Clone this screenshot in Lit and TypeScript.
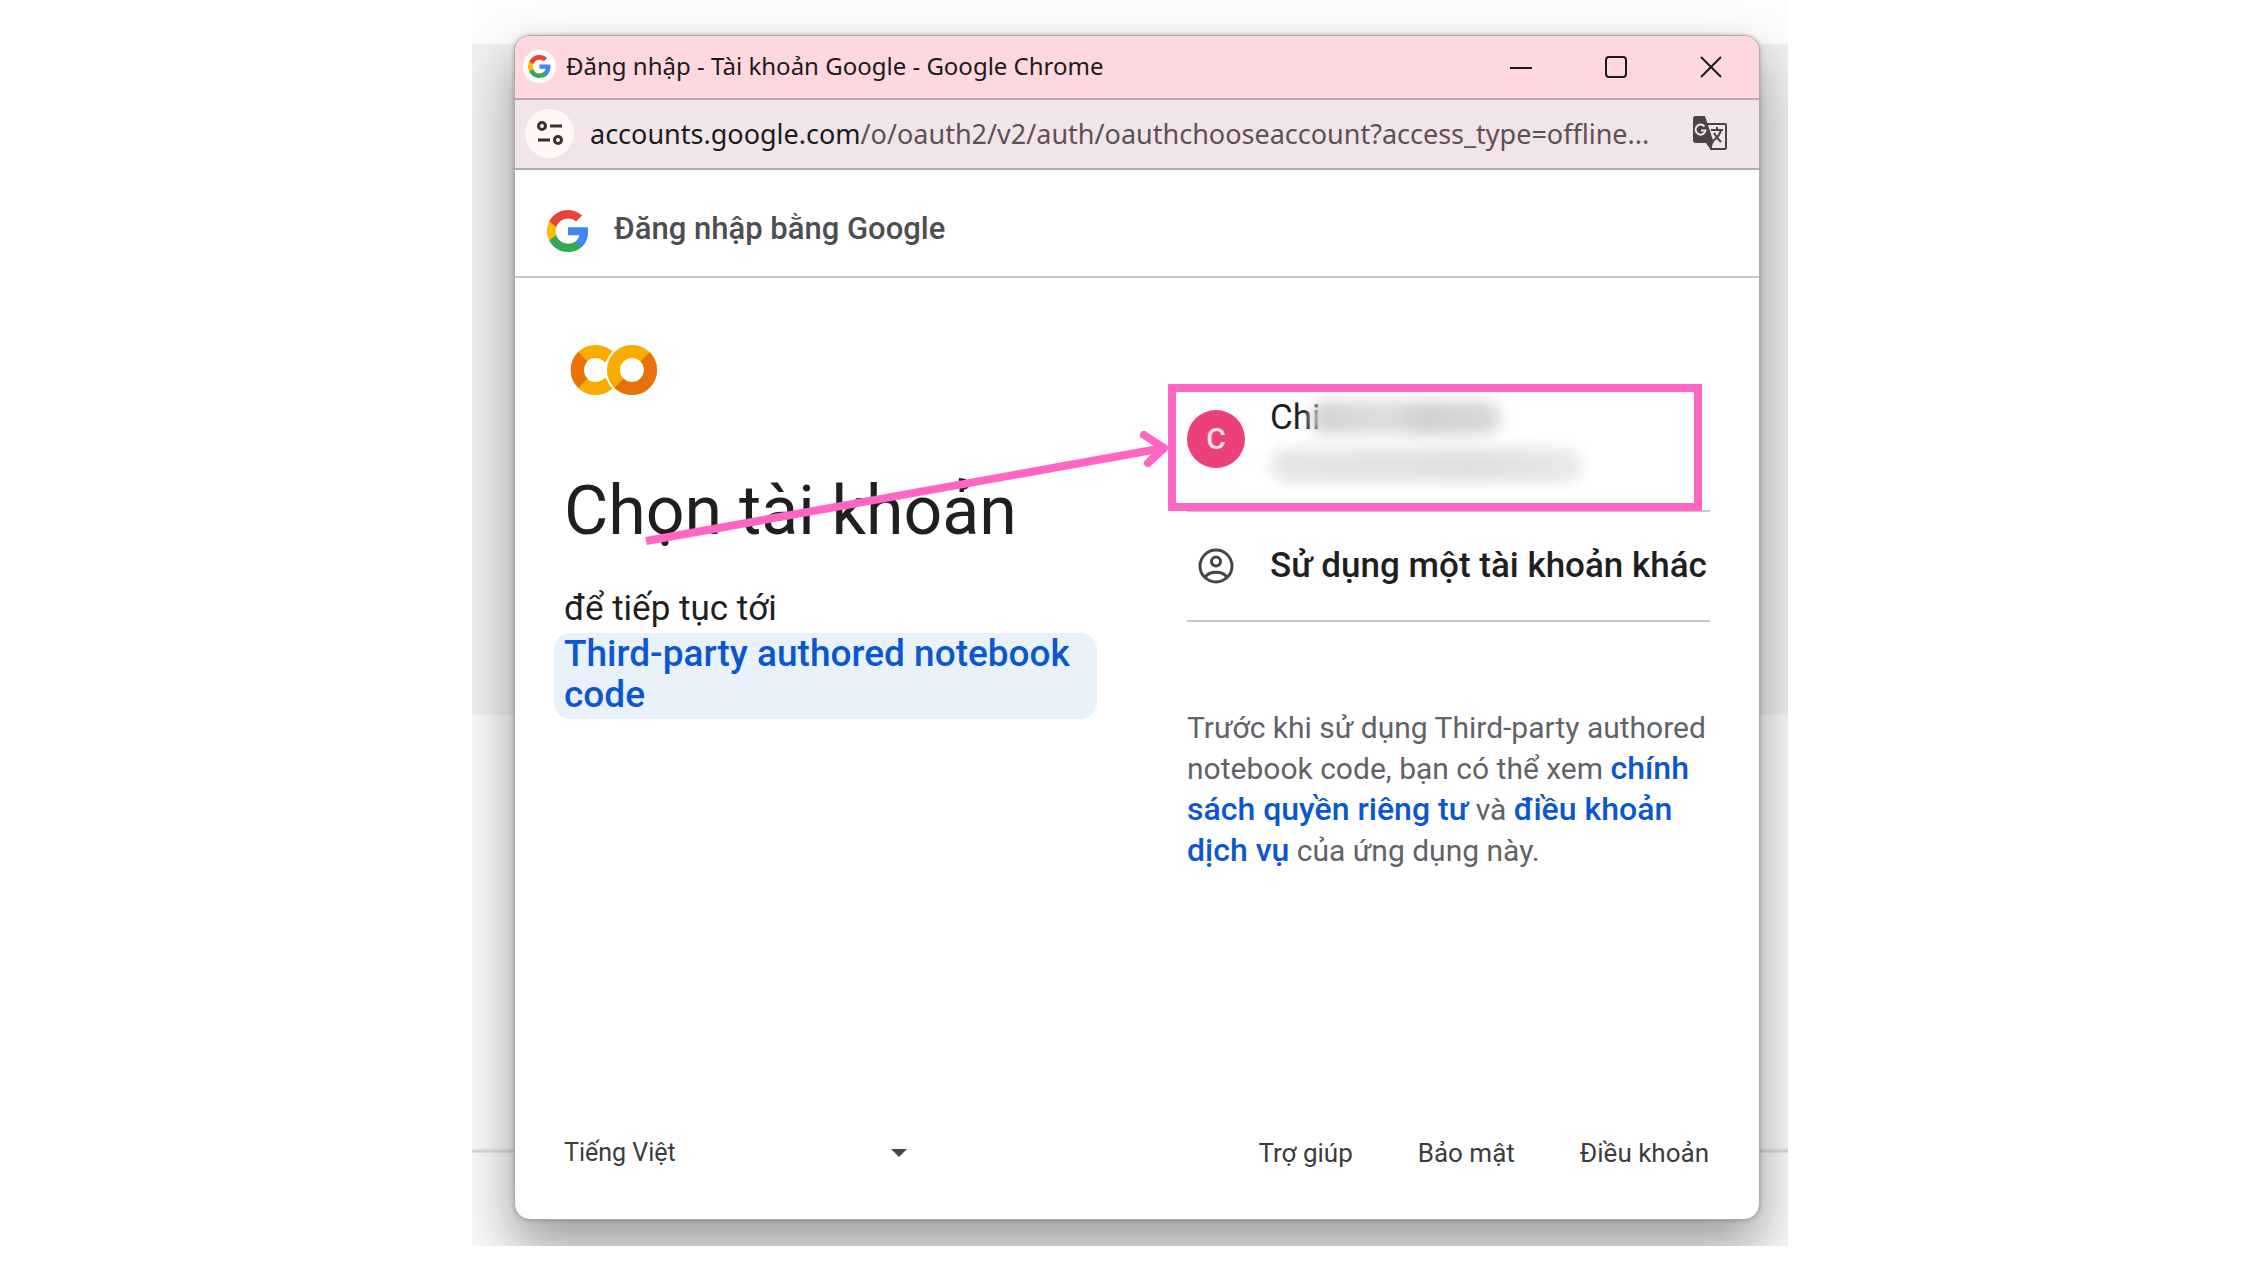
import { LitElement, html, css, svg } from "lit";
import { customElement } from "lit/decorators.js";

const googleG = svg`
  <path fill="#4285F4" d="M45.1 24.5c0-1.6-.1-3.1-.4-4.5H24v8.500h11.800c-.5 2.800-2.100 5.100-4.400 6.700v5.500h7.100c4.200-3.800 6.600-9.500 6.600-16.200z"/>
  <path fill="#34A853" d="M24 46c5.900 0 10.900-2 14.500-5.300l-7.100-5.500c-2 1.300-4.500 2.100-7.400 2.100-5.700 0-10.600-3.900-12.300-9.100H4.300v5.700C8 41.100 15.400 46 24 46z"/>
  <path fill="#FBBC05" d="M11.700 28.200c-.4-1.300-.7-2.700-.7-4.200s.3-2.900.7-4.200v-5.700H4.300C2.900 17.100 2 20.500 2 24s.9 6.900 2.300 9.900l7.400-5.700z"/>
  <path fill="#EA4335" d="M24 10.800c3.200 0 6.100 1.100 8.400 3.300l6.300-6.300C34.900 4.200 29.900 2 24 2 15.400 2 8 6.900 4.300 14.100l7.400 5.700c1.700-5.200 6.600-9 12.300-9z"/>`;

@customElement("app-root")
export class AppRoot extends LitElement {
  static styles = css`
    :host {
      display: block;
      min-height: 100vh;
      background: #fff;
      color: #1f1f1f;
      font-family: Roboto, "Noto Sans", sans-serif;
    }
    * { box-sizing: border-box; }
    button, select { font: inherit; color: inherit; background: none; border: 0; padding: 0; margin: 0; }
    a { color: inherit; text-decoration: none; }
    svg { display: block; flex: none; }

    .backdrop {
      max-width: 1316px;
      min-height: calc(100vh - 24px);
      margin: 0 auto;
      padding: 35px 28px 26px 42px;
      display: flex;
      overflow: hidden;
      background: linear-gradient(#fdfdfd 44px, #f0f0f0 44px 715px, #f9f9f9 715px calc(100% - 98px), #d2d2d2 calc(100% - 94px), #f9f9f9 calc(100% - 93px));
    }
    .window {
      flex: 1;
      min-width: 0;
      display: flex;
      flex-direction: column;
      border: 1px solid #acacac;
      border-radius: 16px;
      overflow: hidden;
      background: #fff;
      box-shadow: 0 0 4px rgba(0, 0, 0, .25), 0 26px 52px 2px rgba(0, 0, 0, .36);
    }
    .titlebar {
      display: flex;
      align-items: center;
      gap: 10px;
      height: 64px;
      padding: 0 32px 1px 8px;
      background: #ffd7df;
      border-bottom: 2px solid #b9a9ad;
      font-family: "Noto Sans", sans-serif;
      font-size: 24px;
      line-height: 32px;
      color: #1b1b1b;
    }
    .favicon { border-radius: 50%; background: #fff; padding: 4px; }
    .titlebar h2 { flex: 1; min-width: 0; margin: 0; padding-bottom: 1px; font-size: inherit; font-weight: 400; white-space: nowrap; overflow: hidden; text-overflow: ellipsis; }
    .controls { display: flex; gap: 63px; }
    .controls button { display: grid; place-items: center; width: 32px; height: 32px; }
    .address {
      display: flex;
      align-items: center;
      gap: 16px;
      height: 70px;
      padding: 0 32px 2px 10px;
      background: #f1e5e9;
      border-bottom: 2px solid #b5a8ab;
      font-family: "Noto Sans", sans-serif;
      font-size: 27px;
      color: #5f5054;
    }
    .site { display: grid; place-items: center; width: 49px; height: 49px; border-radius: 50%; background: #fff8f7; }
    .url { flex: 1; min-width: 0; white-space: nowrap; overflow: hidden; text-overflow: ellipsis; }
    .host { color: #201a1b; }
    .signin {
      display: flex;
      align-items: center;
      gap: 25px;
      height: 108px;
      padding: 15px 32px 0;
      border-bottom: 2px solid #c9c9c9;
      font-size: 31px;
      font-weight: 500;
      color: #4c4f51;
    }
    .signin p { margin: 0; padding-bottom: 4px; }
    .content {
      flex: 1;
      position: relative;
      display: grid;
      grid-template-columns: 27fr 26fr;
      gap: 90px;
      padding: 60px 49px 40px 39px;
    }
    .intro { display: flex; flex-direction: column; align-items: flex-start; }
    .colab { margin: 0 0 0 12px; }
    h1 { margin: 65px 0 0 10px; font-size: 68px; line-height: 88px; font-weight: 400; }
    .lead { margin: 32px 0 0 10px; font-size: 35px; line-height: 44px; }
    .app {
      width: 100%;
      margin-top: 2px;
      padding: 0 10px 4px;
      border-radius: 16px;
      background: #e9f1fb;
      color: #0b57d0;
      font-size: 37px;
      line-height: 41px;
      font-weight: 500;
      text-align: left;
    }
    .accounts { list-style: none; margin: 58px 0 0; padding: 0; }
    .accounts li { border-bottom: 2px solid #c9c9c9; }
    .row { display: grid; grid-template-columns: 58px 1fr; column-gap: 25px; align-items: center; width: 100%; text-align: left; font-size: 35px; line-height: 44px; font-weight: 500; white-space: nowrap; }
    .person { position: relative; height: 114px; align-items: start; }
    .avatar { display: grid; place-items: center; width: 58px; height: 58px; margin-top: 14px; border-radius: 50%; background: #ec407a; color: #fbe3ec; font-size: 30px; }
    .other { height: 108px; padding-bottom: 1px; }
    .other svg { justify-self: center; }
    .name { display: flex; font-weight: 400; }
    .smudge { display: block; border-radius: 20px; filter: blur(7px); }
    .smudge-name { width: 192px; height: 34px; margin-left: -11px; margin-top: 5px; background: linear-gradient(90deg, #d2d2d2, #dedede 40%, #d0d0d0 60%, #dadada); }
    .smudge-mail { width: 312px; height: 34px; margin-top: 8px; background: linear-gradient(90deg, #e6e6e6, #e2e2e2 45%, #dfdfdf 65%, #e9e9e9); }
    .mark { position: absolute; top: -12px; left: -19px; right: 8px; height: 127px; border: 8px solid #ff66c4; pointer-events: none; }
    .arrow { position: absolute; top: 153px; right: 591px; pointer-events: none; }
    .terms { margin: 85px 0 0; font-size: 30px; line-height: 41px; color: #5f6368; }
    .terms a { color: #0b57d0; font-size: 32px; font-weight: 500; }
    .footer {
      display: flex;
      align-items: center;
      justify-content: space-between;
      padding: 0 50px 44px 49px;
      font-size: 26px;
      line-height: 44px;
      color: #3c3c3f;
    }
    .lang { display: grid; grid-template-columns: 343px; align-items: center; font-size: 25px; }
    .lang select, .lang svg { grid-area: 1 / 1; }
    .lang select { appearance: none; height: 44px; }
    .lang svg { justify-self: end; pointer-events: none; }
    .links { display: flex; gap: 65px; }
  `;

  render() {
    return html`
      <div class="backdrop">
        <section class="window" aria-label="Google Chrome">
          <header class="titlebar">
            <svg class="favicon" width="33" height="33" viewBox="0 0 48 48">${googleG}</svg>
            <h2>Đăng nhập - Tài khoản Google - Google Chrome</h2>
            <div class="controls">
              <button aria-label="Minimize"><svg width="22" height="22" viewBox="0 0 22 22" fill="none" stroke="#1b1b1b" stroke-width="2"><path d="M0 12H22"/></svg></button>
              <button aria-label="Maximize"><svg width="22" height="22" viewBox="0 0 22 22" fill="none" stroke="#1b1b1b" stroke-width="2"><rect x="1" y="1" width="20" height="20" rx="3"/></svg></button>
              <button aria-label="Close"><svg width="22" height="22" viewBox="0 0 22 22" fill="none" stroke="#1b1b1b" stroke-width="2"><path d="M1 1L21 21M21 1L1 21"/></svg></button>
            </div>
          </header>
          <div class="address">
            <button class="site" aria-label="Site information">
              <svg width="26" height="26" viewBox="0 0 26 26" fill="none" stroke="#3a3033" stroke-width="3"><circle cx="5" cy="6" r="3.500"/><path d="M13 6H25M1 20H13"/><circle cx="21" cy="20" r="3.500"/></svg>
            </button>
            <div class="url"><span class="host">accounts.google.com</span>/o/oauth2/v2/auth/oauthchooseaccount?access_type=offline...</div>
            <button aria-label="Translate">
              <svg width="34" height="36" viewBox="0 0 34 36"><path fill="#f1e5e9" stroke="#4d4144" stroke-width="2" d="M13 9H32a1 1 0 0 1 1 1V33a1 1 0 0 1-1 1H18z"/><path fill="#4d4144" d="M3 1H12L21 28H3a3 3 0 0 1-3-3V4a3 3 0 0 1 3-3zM13 28H20L18 35z"/><path fill="none" stroke="#f1e5e9" stroke-width="2" d="M11.500 11.500A5 5 0 1 0 12.500 15.500H8"/><path fill="none" stroke="#4d4144" stroke-width="2" d="M18 15H30M24 12V15M28 15C27 20 24 23 20 26M21 18C23 22 25 24 28 27"/></svg>
            </button>
          </div>
          <div class="signin">
            <svg width="42" height="42" viewBox="2 2 44 44">${googleG}</svg>
            <p>Đăng nhập bằng Google</p>
          </div>
          <main class="content">
            <div class="intro">
              <svg class="colab" width="96" height="64" viewBox="0 0 96 64" fill="none">
                <g stroke-width="13">
                  <path stroke="#F9AB00" d="M43.600 20A18.500 18.500 0 1 0 43.600 44"/>
                  <path stroke="#E8710A" d="M16.900 18.900A18.500 18.500 0 0 0 16.900 45.100"/>
                  <circle cx="66" cy="32" r="18.500" stroke="#fff" stroke-width="17"/>
                  <circle cx="66" cy="32" r="18.500" stroke="#F9AB00"/>
                  <path stroke="#E8710A" d="M79.100 18.900A18.500 18.500 0 0 1 52.900 45.100"/>
                </g>
              </svg>
              <h1>Chọn tài khoản</h1>
              <p class="lead">để tiếp tục tới</p>
              <button class="app">Third-party authored notebook code</button>
            </div>
            <div>
              <ul class="accounts">
                <li>
                  <button class="row person">
                    <span class="avatar">C</span>
                    <span><span class="name">Chi<span class="smudge smudge-name"></span></span><span class="smudge smudge-mail"></span></span>
                    <span class="mark"></span>
                  </button>
                </li>
                <li>
                  <button class="row other">
                    <svg width="36" height="36" viewBox="0 0 36 36" fill="none" stroke="#444746" stroke-width="3"><circle cx="18" cy="18" r="16"/><circle cx="18" cy="13.500" r="4.500"/><path d="M7 29C12 22.500 24 22.500 29 29"/></svg>
                    <span>Sử dụng một tài khoản khác</span>
                  </button>
                </li>
              </ul>
              <p class="terms">Trước khi sử dụng Third-party authored notebook code, bạn có thể xem <a href="#privacy">chính sách quyền riêng tư</a> và <a href="#terms">điều khoản dịch vụ</a> của ứng dụng này.</p>
            </div>
            <svg class="arrow" width="524" height="120" viewBox="0 0 524 120" fill="none" stroke="#ff66c4" stroke-width="8"><path d="M2 110L520 17"/><path stroke-linecap="round" stroke-linejoin="round" d="M500 4L520 17L504 32"/></svg>
          </main>
          <footer class="footer">
            <label class="lang">
              <select aria-label="Tiếng Việt"><option>Tiếng Việt</option></select>
              <svg width="16" height="8" viewBox="0 0 16 8"><path fill="#444746" d="M0 0H16L8 8z"/></svg>
            </label>
            <nav class="links"><a href="#help">Trợ giúp</a><a href="#privacy">Bảo mật</a><a href="#terms">Điều khoản</a></nav>
          </footer>
        </section>
      </div>`;
  }
}
